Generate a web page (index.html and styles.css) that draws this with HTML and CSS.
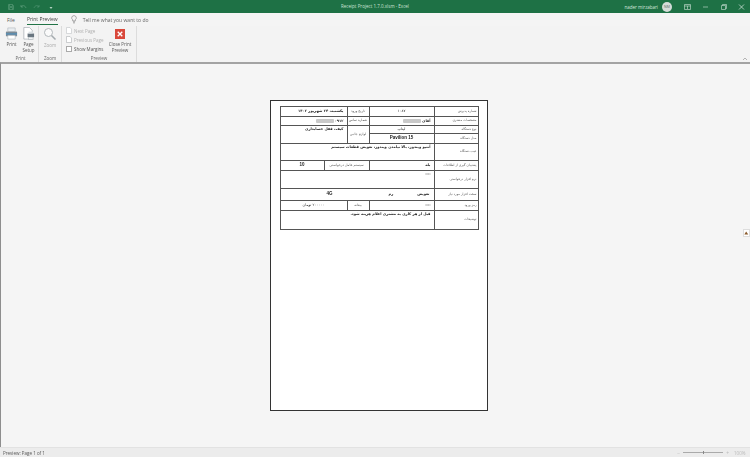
FILE: index.html
```html
<!DOCTYPE html>
<html lang="en">
<head>
<meta charset="utf-8">
<title>Receipt Project 1.7.0.xlsm - Excel</title>
<link rel="stylesheet" href="styles.css">
</head>
<body>
<div class="app">
  <header class="titlebar">
    <div class="qat">
      <svg width="6" height="6" viewBox="0 0 6 6"><path d="M.5.5h4l1 1v4h-5zM1.5.5v2h3v-2M1.5 5.5v-2h3v2" fill="none" stroke="#5f9f7c" stroke-width=".6"/></svg>
      <svg width="7" height="6" viewBox="0 0 7 6"><path d="M1 1v2h2M1 3c1-2 4-2 5 1" fill="none" stroke="#5f9f7c" stroke-width=".7"/></svg>
      <svg width="7" height="6" viewBox="0 0 7 6"><path d="M6 1v2H4M6 3C5 1 2 1 1 4" fill="none" stroke="#4f9370" stroke-width=".7"/></svg>
      <svg class="qat-more" width="4" height="6" viewBox="0 0 4 6"><path d="M.5 1h3M.5 3h3L2 5z" fill="#b6d4c3"/></svg>
    </div>
    <div class="doc-title">Receipt Project 1.7.0.xlsm - Excel</div>
    <div class="win">
      <span class="user">nader mirzabari</span>
      <span class="avatar">NM</span>
      <svg class="ctl" width="7" height="6" viewBox="0 0 7 6"><path d="M.5.5h6v5h-6zM.5 2h6M3.5 2v3" fill="none" stroke="#cfe3d7" stroke-width=".6"/></svg>
      <svg class="ctl" width="7" height="6" viewBox="0 0 7 6"><path d="M1 3h5" stroke="#cfe3d7" stroke-width=".6"/></svg>
      <svg class="ctl" width="7" height="6" viewBox="0 0 7 6"><path d="M1.5 1.5h4v4h-4zM2.5 1.5v-1h4v4h-1" fill="none" stroke="#cfe3d7" stroke-width=".6"/></svg>
      <svg class="ctl" width="7" height="6" viewBox="0 0 7 6"><path d="M1 .5l5 5M6 .5l-5 5" stroke="#dfece5" stroke-width=".7"/></svg>
    </div>
  </header>

  <nav class="tabs">
    <span class="tab">File</span>
    <span class="tab tab-active">Print Preview</span>
    <svg class="bulb" width="6" height="9" viewBox="0 0 6 9"><path d="M3 .6a2.3 2.3 0 0 1 1.3 4.2V6H1.7V4.8A2.3 2.3 0 0 1 3 .6zM2 7h2M2.3 8h1.4" fill="none" stroke="#777" stroke-width=".6"/></svg>
    <span class="tell">Tell me what you want to do</span>
  </nav>

  <section class="ribbon">
    <div class="group group-print">
      <div class="group-body">
        <div class="big">
          <svg width="13" height="13" viewBox="0 0 14 14"><path d="M3 1h8v4H3z" fill="#e9edf0" stroke="#9aa5ad" stroke-width=".5"/><path d="M1 5h12v5H1z" fill="#7d8b96"/><path d="M1 7h12v1H1z" fill="#3f8fc4"/><path d="M3 9h8v4H3z" fill="#fff" stroke="#9aa5ad" stroke-width=".5"/></svg>
          <span>Print</span>
        </div>
        <div class="big">
          <svg width="13" height="13" viewBox="0 0 14 14"><path d="M2 .5h6l3 3V13H2z" fill="#fff" stroke="#8d979e" stroke-width=".6"/><path d="M6 7h7v4H6z" fill="#69757f"/><path d="M7 5h5v2H7z" fill="#d9dfe3"/><path d="M7 11h5v2.500H7z" fill="#eef1f3" stroke="#8d979e" stroke-width=".4"/></svg>
          <span>Page<br>Setup</span>
        </div>
      </div>
      <div class="group-label">Print</div>
    </div>
    <div class="group group-zoom">
      <div class="group-body">
        <div class="big big-off">
          <svg width="14" height="14" viewBox="0 0 14 14"><circle cx="5.500" cy="5.500" r="4" fill="#fafafa" stroke="#b3b8bb" stroke-width="1"/><path d="M8.500 8.500l4 4" stroke="#a5abaf" stroke-width="1.600"/></svg>
          <span>Zoom</span>
        </div>
      </div>
      <div class="group-label">Zoom</div>
    </div>
    <div class="group group-preview">
      <div class="group-body">
        <div class="small-col">
          <div class="small small-off"><svg width="6" height="7" viewBox="0 0 6 7"><path d="M.5.500h3.500l1.500 1.500v4.500H.5z" fill="#fff" stroke="#b5b9bc" stroke-width=".5"/></svg>Next Page</div>
          <div class="small small-off"><svg width="6" height="7" viewBox="0 0 6 7"><path d="M.5.500h3.500l1.500 1.500v4.500H.5z" fill="#fff" stroke="#9ea3a6" stroke-width=".5"/></svg>Previous Page</div>
          <div class="small"><span class="check"></span>Show Margins</div>
        </div>
        <div class="big big-close">
          <svg width="10" height="10" viewBox="0 0 11 11"><rect width="11" height="11" fill="#d9483b"/><path d="M3 3l5 5M8 3l-5 5" stroke="#fff" stroke-width="1.500"/></svg>
          <span>Close Print<br>Preview</span>
        </div>
      </div>
      <div class="group-label">Preview</div>
    </div>
    <svg class="collapse" width="6" height="4" viewBox="0 0 6 4"><path d="M1 3l2-2 2 2" fill="none" stroke="#888" stroke-width=".6"/></svg>
  </section>

  <main class="stage">
    <article class="sheet">
      <table class="receipt" dir="rtl">
        <colgroup>
          <col class="c-label"><col class="c-main"><col class="c-label2"><col class="c-mid"><col class="c-end">
        </colgroup>
        <tr class="r10">
          <th>شماره پذیرش</th><td class="v">۱۰۸۷</td><th class="s">تاریخ ورود</th><td colspan="2" class="b inset">یکشنبه، ۲۴ شهریور ۱۴۰۲</td>
        </tr>
        <tr class="r9">
          <th>مشخصات مشتری</th><td class="b inset">آقای <span class="smudge"></span></td><th class="s">شماره تماس</th><td colspan="2" class="b inset">۰۹۱۲<span class="smudge"></span></td>
        </tr>
        <tr class="r8">
          <th>نوع دستگاه</th><td class="v">لپتاپ</td><th class="s" rowspan="2">لوازم جانبی</th><td colspan="2" rowspan="2" class="b top inset">کیف، قفل حسابداری</td>
        </tr>
        <tr class="r10">
          <th>مدل دستگاه</th><td class="b latin">Pavilion 15</td>
        </tr>
        <tr class="r17">
          <th>عیب دستگاه</th><td colspan="4" class="b top inset">آنتیو ویندوز، بالا نیامدن ویندوز، تعویض قطعات سیستم</td>
        </tr>
        <tr class="r10">
          <th>پشتیبان گیری از اطلاعات</th><td class="b inset">بله</td><td class="s" colspan="2">سیستم عامل درخواستی</td><td class="b latin thick">10</td>
        </tr>
        <tr class="r18">
          <th>نرم افزار درخواستی</th><td colspan="4" class="top inset">----</td>
        </tr>
        <tr class="r12">
          <th>سخت افزار مورد نیاز</th>
          <td colspan="4"><div class="hw"><b>تعویض</b><b>رم</b><b class="latin">4G</b></div></td>
        </tr>
        <tr class="r10">
          <th>رمز ورود</th><td class="inset">----</td><th class="s">بیعانه</th><td colspan="2" class="v">۲۰۰۰۰۰ تومان</td>
        </tr>
        <tr class="r19">
          <th>توضیحات</th><td colspan="4" class="b top inset">قبل از هر کاری به مشتری اعلام هزینه شود.</td>
        </tr>
      </table>
    </article>
    <div class="side-tab">
      <svg width="7" height="6" viewBox="0 0 7 6"><path d="M.5 5l2.500-4 3 4z" fill="#8a5a2b"/></svg>
    </div>
  </main>

  <footer class="status">
    <span>Preview: Page 1 of 1</span>
    <div class="zoomer">
      <span class="zsign">−</span>
      <span class="slider"><i></i></span>
      <span class="zsign">+</span>
      <span class="zpct">100%</span>
    </div>
  </footer>
</div>
</body>
</html>
```
FILE: styles.css
```css
* { box-sizing: border-box; }
html, body { margin: 0; height: 100%; }
body { font-family: "Open Sans", "Liberation Sans", sans-serif; color: #444; overflow: hidden; background: #f5f5f5; }
.app { width: 750px; height: 457px; display: flex; flex-direction: column; filter: blur(.25px); }

.titlebar { height: 13px; background: #1e7145; display: flex; align-items: center; padding: 0 4px 0 8px; flex: none; }
.qat { display: flex; gap: 6px; align-items: center; width: 306px; }
.qat-more { margin-left: 3px; }
.doc-title { font-size: 4.500px; color: #cfe3d7; width: 120px; text-align: center; margin-left: 1px; margin-top: -1px; }
.win { margin-left: auto; display: flex; align-items: center; }
.user { font-size: 4.500px; color: #d7e8de; margin-right: 4px; }
.avatar { width: 10px; height: 10px; border-radius: 50%; background: #d6dcd9; color: #5b6a62; font-size: 3.500px; display: flex; align-items: center; justify-content: center; margin-right: 12px; }
.ctl { margin-right: 11px; }
.ctl:last-child { margin-right: 1px; }

.tabs { height: 13px; background: #f4f4f4; display: flex; align-items: center; flex: none; font-size: 5px; padding-left: 7px; }
.tab { color: #555; }
.tab-active { margin-left: 12px; position: relative; color: #444; padding-bottom: 1px; }
.tab-active::after { content: ""; position: absolute; left: 0; right: 0; bottom: -2px; height: 1px; background: #217346; }
.bulb { margin-left: 13px; }
.tell { margin-left: 6px; color: #666; }

.ribbon { height: 36px; background: #f3f3f3; display: flex; flex: none; position: relative; }
.group { display: flex; flex-direction: column; border-right: 1px solid #dcdcdc; padding-top: 1px; }
.group-print { width: 39px; padding-left: 3px; }
.group-zoom { width: 23px; }
.group-preview { width: 75px; }
.group-body { flex: 1; display: flex; }
.group-label { height: 7px; font-size: 4.500px; text-align: center; color: #666; line-height: 7px; }
.big { display: flex; flex-direction: column; align-items: center; font-size: 4.500px; line-height: 6px; text-align: center; color: #555; width: 17px; }
.big svg { margin-bottom: 1px; flex: none; }
.big-off { width: 100%; color: #aaa; }
.big-close { width: 26px; margin-left: 2px; }
.big-close svg { margin-top: 2px; margin-bottom: 2px; }
.small-col { width: 43px; padding: 0 0 0 4px; display: flex; flex-direction: column; gap: 2px; }
.small { display: flex; align-items: center; gap: 2px; font-size: 4.500px; height: 7px; color: #555; white-space: nowrap; }
.small-off { color: #b0b0b0; }
.check { width: 6px; height: 6px; background: #fff; border: .5px solid #aaa; flex: none; }
.collapse { position: absolute; right: 2px; bottom: 1px; }

.stage { flex: 1; min-height: 0; background: #f5f5f5; border-top: 2px solid #a3a3a3; border-left: 1px solid #8e8e8e; display: flex; justify-content: center; position: relative; padding: 36px 0 0 5px; }
.sheet { width: 218px; height: 311px; background: #fff; border: 1px solid #333; padding: 5px 9px 0 9px; flex: none; margin-left: 1px; }

.receipt { width: 198px; table-layout: fixed; border-collapse: collapse; font-family: "DejaVu Sans", sans-serif; font-size: 3.700px; color: #222; line-height: 1; }
.c-label { width: 44px; }
.c-main { width: 65px; }
.c-label2 { width: 22px; }
.c-mid { width: 23px; }
.c-end { width: 44px; }
.receipt th, .receipt td { border: .6px solid #555; padding: 0 1px; overflow: hidden; white-space: nowrap; }
.receipt th { font-weight: normal; color: #555; text-align: right; font-size: 3.200px; }
.receipt td { text-align: center; }
.receipt .s { font-weight: normal; color: #555; font-size: 3.400px; text-align: center; }
.receipt .v { font-weight: normal; }
.receipt .b { font-weight: bold; }
.receipt .inset { text-align: right; padding-right: 3px; }
.receipt .top { vertical-align: top; padding-top: 2px; }
.receipt .thick { border-right: 1px solid #222; }
.latin { font-family: "Liberation Sans", sans-serif; font-weight: bold; font-size: 4.500px; }
.r8 { height: 8px; }
.r9 { height: 9px; }
.r10 { height: 10px; }
.r12 { height: 12px; }
.r17 { height: 17px; }
.r18 { height: 18px; }
.r19 { height: 19px; }
.smudge { display: inline-block; width: 18px; height: 4px; background: #c9c9c9; vertical-align: middle; border-radius: 1px; }
.hw { display: flex; align-items: center; padding-right: 3px; gap: 24px; }
.hw .latin { margin-right: 32px; }

.side-tab { position: absolute; right: 0; top: 165px; width: 7px; height: 8px; background: #fff; border: .5px solid #ddd; display: flex; align-items: center; justify-content: center; }

.status { height: 10px; background: #ececec; border-top: 1px solid #e2e2e2; display: flex; align-items: center; justify-content: space-between; flex: none; padding: 0 2px 0 3px; font-size: 4.500px; color: #555; }
.zoomer { display: flex; align-items: center; gap: 3px; color: #bbb; }
.slider { width: 40px; height: 1px; background: #aaa; position: relative; display: block; }
.slider i { position: absolute; left: 20px; top: -1px; width: 1px; height: 3px; background: #888; }
.zsign { font-size: 5px; }
.zpct { margin-left: 2px; width: 14px; }
```
